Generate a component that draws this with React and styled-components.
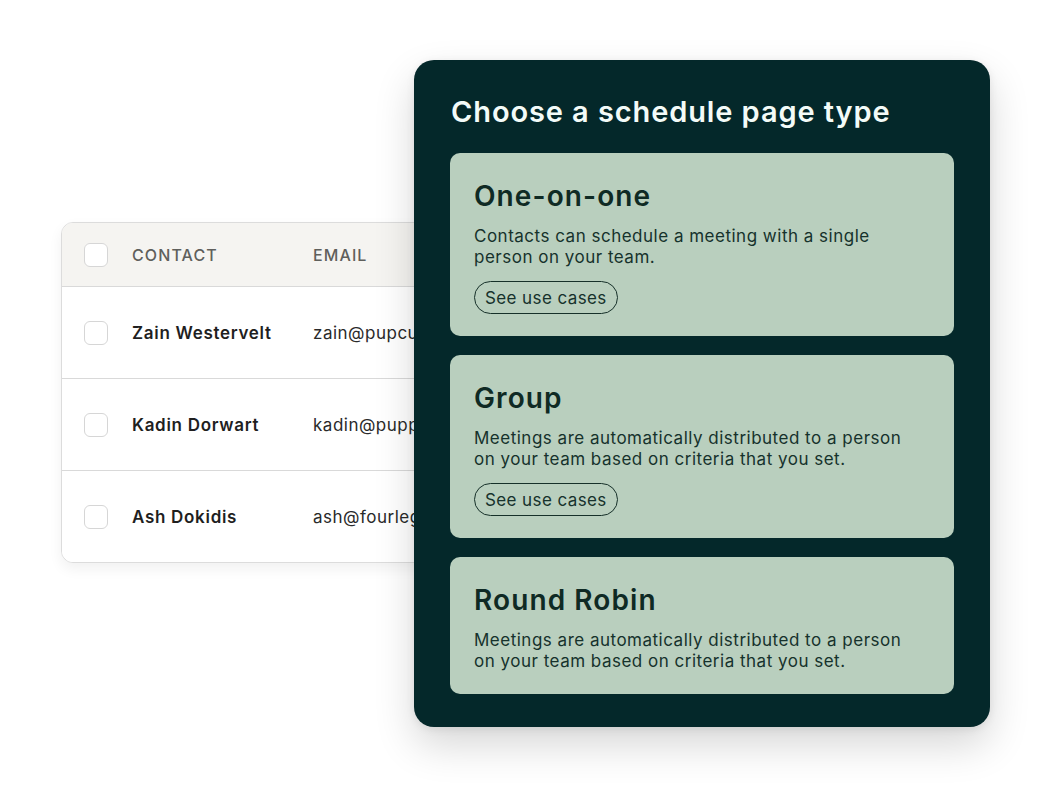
import React from "react";
import styled, { createGlobalStyle } from "styled-components";

const Global = createGlobalStyle`
  html, body { margin: 0; padding: 0; background: #ffffff; }
  body { font-family: Inter, "Noto Sans", "Liberation Sans", sans-serif; }
  * { box-sizing: border-box; }
`;

const Stage = styled.div`
  position: relative;
  width: 1050px;
  height: 788px;
  padding: 222px 0 0 61px;
  overflow: hidden;
`;

const TableCard = styled.div`
  width: 600px;
  border: 1px solid #dcdcdc;
  border-radius: 12px;
  background: #ffffff;
  overflow: hidden;
  box-shadow: 0 6px 14px rgba(0, 0, 0, 0.06);
`;

const Row = styled.div`
  display: grid;
  grid-template-columns: 24px 157px 1fr;
  column-gap: 24px;
  align-items: center;
  padding-left: 22px;
  height: ${(p) => (p.$head ? "63px" : "92px")};
  background: ${(p) => (p.$head ? "#f5f4f1" : "#ffffff")};
  border-top: ${(p) => (p.$first ? "none" : "1px solid #d9d9d9")};
`;

const Check = styled.span`
  display: block;
  width: 24px;
  height: 24px;
  border: 1.5px solid #d6d6d6;
  border-radius: 6px;
  background: #fff;
`;

const HeadCell = styled.span`
  font-size: 16px;
  font-weight: 500;
  letter-spacing: 1.1px;
  color: #5f5f5c;
  text-transform: uppercase;
`;

const Name = styled.span`
  font-size: 17px;
  font-weight: 600;
  letter-spacing: 0.7px;
  color: #1f1f1f;
  white-space: nowrap;
`;

const Email = styled.span`
  font-size: 17px;
  font-weight: 400;
  letter-spacing: 0.5px;
  color: #2a2a2a;
  white-space: nowrap;
`;

const Panel = styled.section`
  position: absolute;
  left: 414px;
  top: 60px;
  width: 576px;
  height: 667px;
  background: #04282a;
  border-radius: 20px;
  padding: 32px 36px 0 36px;
  box-shadow: 0 18px 40px rgba(0, 0, 0, 0.16), 0 2px 8px rgba(0, 0, 0, 0.08);
  display: flex;
  flex-direction: column;
`;

const Title = styled.h2`
  margin: 0 0 21px 1px;
  font-size: 29px;
  line-height: 40px;
  font-weight: 600;
  color: #f3fbf8;
  letter-spacing: 0.9px;
`;

const Cards = styled.div`
  display: flex;
  flex-direction: column;
  gap: 19px;
`;

const Card = styled.div`
  background: #b9cfbe;
  border-radius: 10px;
  padding: 26px 24px 22px 24px;
  display: flex;
  flex-direction: column;
  align-items: flex-start;
`;

const CardTitle = styled.h3`
  margin: 0 0 13px 0;
  font-size: 28px;
  line-height: 34px;
  font-weight: 600;
  letter-spacing: 1.1px;
  color: #0f2a24;
`;

const Desc = styled.p`
  margin: 0;
  font-size: 17px;
  line-height: 21px;
  letter-spacing: 0.5px;
  color: #16322c;
  max-width: 436px;
`;

const UseCases = styled.button`
  margin-top: 13px;
  height: 33px;
  padding: 0 10px;
  border: 1.5px solid #163029;
  border-radius: 999px;
  background: transparent;
  font-family: inherit;
  font-size: 17px;
  letter-spacing: 0.4px;
  color: #16322c;
  cursor: pointer;
`;

const contacts = [
  { name: "Zain Westervelt", email: "zain@pupcuts.com" },
  { name: "Kadin Dorwart", email: "kadin@puppyplace.com" },
  { name: "Ash Dokidis", email: "ash@fourlegs.com" },
];

const types = [
  {
    title: "One-on-one",
    desc: "Contacts can schedule a meeting with a single person on your team.",
    button: true,
  },
  {
    title: "Group",
    desc: "Meetings are automatically distributed to a person on your team based on criteria that you set.",
    button: true,
  },
  {
    title: "Round Robin",
    desc: "Meetings are automatically distributed to a person on your team based on criteria that you set.",
    button: false,
  },
];

export default function App() {
  return (
    <>
      <Global />
      <Stage>
        <TableCard>
          <Row $head $first>
            <Check />
            <HeadCell>Contact</HeadCell>
            <HeadCell>Email</HeadCell>
          </Row>
          {contacts.map((c) => (
            <Row key={c.name}>
              <Check />
              <Name>{c.name}</Name>
              <Email>{c.email}</Email>
            </Row>
          ))}
        </TableCard>
        <Panel>
          <Title>Choose a schedule page type</Title>
          <Cards>
            {types.map((t) => (
              <Card key={t.title}>
                <CardTitle>{t.title}</CardTitle>
                <Desc>{t.desc}</Desc>
                {t.button && <UseCases>See use cases</UseCases>}
              </Card>
            ))}
          </Cards>
        </Panel>
      </Stage>
    </>
  );
}
